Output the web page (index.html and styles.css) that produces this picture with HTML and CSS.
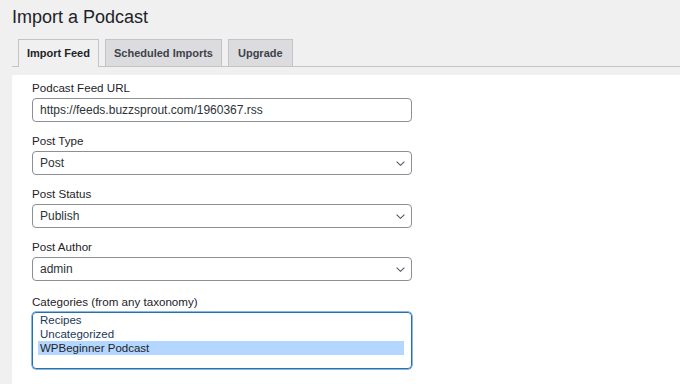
FILE: index.html
```html
<!DOCTYPE html>
<html lang="en">
<head>
<meta charset="utf-8">
<title>Import a Podcast</title>
<link rel="stylesheet" href="styles.css">
</head>
<body>
<div class="page">
  <h1 class="title">Import a Podcast</h1>
  <nav class="tabs">
    <span class="tab tab-active">Import Feed</span>
    <span class="tab">Scheduled Imports</span>
    <span class="tab tab-upgrade">Upgrade</span>
  </nav>
  <main class="panel">
    <div class="field">
      <label class="label">Podcast Feed URL</label>
      <input class="input" type="text" value="https://feeds.buzzsprout.com/1960367.rss">
    </div>
    <div class="field">
      <label class="label">Post Type</label>
      <div class="select"><span>Post</span><svg class="chev" width="9" height="5" viewBox="0 0 9 5"><path d="M0.6 0.6 L4.5 4.3 L8.4 0.6" fill="none" stroke="#50575e" stroke-width="1.1"/></svg></div>
    </div>
    <div class="field">
      <label class="label">Post Status</label>
      <div class="select"><span>Publish</span><svg class="chev" width="9" height="5" viewBox="0 0 9 5"><path d="M0.6 0.6 L4.5 4.3 L8.4 0.6" fill="none" stroke="#50575e" stroke-width="1.1"/></svg></div>
    </div>
    <div class="field">
      <label class="label">Post Author</label>
      <div class="select"><span>admin</span><svg class="chev" width="9" height="5" viewBox="0 0 9 5"><path d="M0.6 0.6 L4.5 4.3 L8.4 0.6" fill="none" stroke="#50575e" stroke-width="1.1"/></svg></div>
    </div>
    <div class="field field-last">
      <label class="label">Categories (from any taxonomy)</label>
      <div class="listbox">
        <div class="option">Recipes</div>
        <div class="option">Uncategorized</div>
        <div class="option option-selected">WPBeginner Podcast</div>
      </div>
    </div>
  </main>
</div>
</body>
</html>
```
FILE: styles.css
```css
html, body {
  margin: 0;
  padding: 0;
  background: #f0f0f1;
  font-family: "Liberation Sans", Arial, sans-serif;
  color: #1d2327;
}
.page {
  padding-left: 12px;
  height: 384px;
  overflow: hidden;
  display: flex;
  flex-direction: column;
}
.title {
  margin: 0;
  padding-top: 5px;
  font-size: 18px;
  font-weight: 400;
  line-height: 24px;
  color: #1d2327;
}
.tabs {
  margin-top: 10px;
  display: flex;
  gap: 6px;
  padding-left: 6px;
  border-bottom: 1px solid #c3c4c7;
  height: 27px;
}
.tab {
  display: block;
  height: 26px;
  line-height: 26px;
  padding: 0 8px;
  border: 1px solid #c3c4c7;
  border-bottom: none;
  background: #dcdcde;
  color: #3c434a;
  font-size: 11px;
  font-weight: 700;
}
.tab-upgrade {
  padding: 0 9px;
}
.tab-active {
  background: #f0f0f1;
  color: #1d2327;
  height: 27px;
}
.panel {
  margin-top: 8px;
  flex: 1;
  background: #ffffff;
  padding: 5px 0 0 20px;
  display: flex;
  flex-direction: column;
  gap: 11px;
  border-top-left-radius: 2px;
}
.field {
  display: flex;
  flex-direction: column;
  gap: 2px;
  width: 380px;
}
.field-last {
  margin-top: 2px;
}
.label {
  font-size: 11.6px;
  line-height: 16px;
  color: #1d2327;
}
.input,
.select {
  box-sizing: border-box;
  width: 380px;
  height: 24px;
  margin: 0;
  border: 1px solid #8c8f94;
  border-radius: 4px;
  padding: 0 7px;
  font-family: "Liberation Sans", Arial, sans-serif;
  font-size: 12px;
  color: #2c3338;
  background: #ffffff;
  outline: none;
}
.select {
  display: flex;
  align-items: center;
  justify-content: space-between;
  padding-right: 6px;
}
.chev {
  display: block;
}
.listbox {
  box-sizing: border-box;
  width: 380px;
  height: 57px;
  border: 1px solid #2271b1;
  border-radius: 4px;
  padding: 0 7px 0 5px;
  box-shadow: 0 0 0 0.5px #2271b1;
}
.option {
  height: 14px;
  line-height: 14px;
  padding-left: 2px;
  font-size: 11.5px;
  color: #22385a;
}
.option-selected {
  background: #b3d7ff;
  color: #1d2327;
}
```
